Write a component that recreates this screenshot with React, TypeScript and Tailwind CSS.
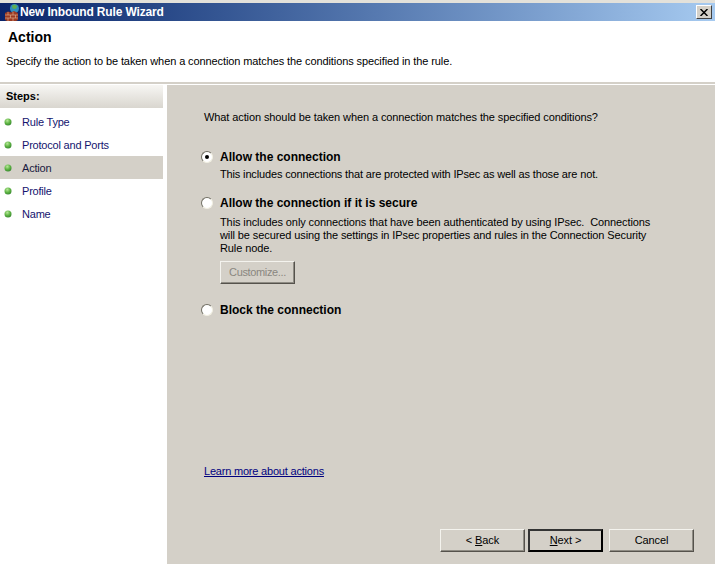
const font = "font-['Liberation_Sans',Arial,sans-serif]";

const steps = [
  { name: "Rule Type" },
  { name: "Protocol and Ports" },
  { name: "Action", active: true },
  { name: "Profile" },
  { name: "Name" },
];

function WizardIcon() {
  return (
    <svg width="17" height="18" viewBox="0 0 17 18" className="shrink-0">
      <circle cx="11.5" cy="5.5" r="4.5" fill="#2f8fc0" />
      <path d="M9 2.5l3-1 2.5 2-2 2.5-3-.5z" fill="#5fae52" />
      <path d="M2 10l3-1.5 3 1 3-1.5 3 1.500 1 1V17l-2 1H4l-2-1z" fill="#9c3a22" />
      <path d="M2 12h13M2 15h13M5 9v3M10 9v3M7.500 12v3M12.500 12v3M5 15v3M10 15v3" stroke="#d9a98a" strokeWidth="0.7" fill="none" />
    </svg>
  );
}

function StepDot() {
  return (
    <svg width="10" height="10" viewBox="0 0 10 10" className="mt-px shrink-0">
      <defs>
        <radialGradient id="dot" cx="0.4" cy="0.3" r="0.8">
          <stop offset="0" stopColor="#b8e89a" />
          <stop offset="0.5" stopColor="#5fb544" />
          <stop offset="1" stopColor="#2f7d2a" />
        </radialGradient>
      </defs>
      <circle cx="5" cy="5" r="3.5" fill="url(#dot)" />
    </svg>
  );
}

function Radio({ checked }: { checked?: boolean }) {
  return (
    <span className="relative block h-3 w-3 shrink-0 rounded-full border border-t-[#716f64] border-l-[#716f64] border-r-[#f1efe2] border-b-[#f1efe2] bg-white">
      {checked && <span className="absolute left-[3px] top-[3px] h-1 w-1 rounded-full bg-black" />}
    </span>
  );
}

function Option({ label, checked, children }: { label: string; checked?: boolean; children?: React.ReactNode }) {
  return (
    <div className="flex gap-[7px]">
      <div className="pt-[4px]">
        <Radio checked={checked} />
      </div>
      <div className="w-[434px]">
        <div className="text-[12px] font-bold leading-[20px] text-black">{label}</div>
        {children}
      </div>
    </div>
  );
}

function Button({ children, isDefault, disabled }: { children: React.ReactNode; isDefault?: boolean; disabled?: boolean }) {
  const edge = isDefault
    ? "border-2 border-t-[#333] border-l-[#333] border-r-black border-b-black bg-[#d4d0c8] text-black tracking-[-0.1px]"
    : disabled
      ? "border border-t-[#f4f3ee] border-l-[#f4f3ee] border-r-[#55524c] border-b-[#55524c] shadow-[inset_-1px_-1px_0_#8f8c84] bg-[#d4d0c8] text-[#8a8780] tracking-[-0.35px]"
      : "border border-t-[#f4f3ee] border-l-[#f4f3ee] border-r-[#55524c] border-b-[#55524c] shadow-[inset_-1px_-1px_0_#8f8c84] bg-[#d4d0c8] text-black tracking-[-0.1px]";
  return (
    <div className={`flex h-full w-full items-center justify-center text-[11px] ${edge}`}>{children}</div>
  );
}

export default function App() {
  return (
    <div className={`flex h-[564px] w-[715px] flex-col overflow-hidden bg-white ${font}`}>
      <div className="h-[3px] bg-[#e3e1da]" />
      <div className="flex h-[18px] items-center bg-gradient-to-r from-[#0a246a] to-[#a6caf0] pl-[3px] pr-[3px]">
        <WizardIcon />
        <span className="ml-0 text-[12px] font-bold tracking-[-0.15px] text-white">New Inbound Rule Wizard</span>
        <div className="ml-auto flex h-[14px] w-[16px] items-center justify-center border border-t-white border-l-white border-r-[#404040] border-b-[#404040] bg-[#d4d0c8]">
          <svg width="8" height="7" viewBox="0 0 8 7">
            <path d="M0.5 0l7 7M7.5 0l-7 7" stroke="black" strokeWidth="1.5" fill="none" />
          </svg>
        </div>
      </div>
      <div className="h-[61px] pl-[8px] pt-[8px]">
        <div className="text-[14px] font-bold leading-[17px] text-black">Action</div>
        <div className="-ml-[2px] mt-[8px] text-[11px] leading-[15px] tracking-[-0.1px] text-black">
          Specify the action to be taken when a connection matches the conditions specified in the rule.
        </div>
      </div>
      <div className="h-[2px] bg-[#d4d0c8]" />
      <div className="h-px bg-white" />
      <div className="flex min-h-0 flex-1">
        <div className="w-[164px] shrink-0 bg-white">
          <div className="mr-px flex h-[23px] items-center bg-gradient-to-b from-[#f7f6f3] to-[#d9d6cf] pl-[6px] text-[11px] font-bold text-black">
            Steps:
          </div>
          <div className="pt-[2px]">
            {steps.map((s) => (
              <div
                key={s.name}
                className={`mr-px flex h-[23px] items-center gap-[9px] pl-[3px] text-[11px] tracking-[-0.2px] ${s.active ? "bg-[#d4d0c8] text-[#1a1a40]" : "text-[#14146e]"}`}
              >
                <StepDot />
                <span className="pt-px">{s.name}</span>
              </div>
            ))}
          </div>
        </div>
        <div className="w-[3px] shrink-0 bg-white" />
        <div className="flex flex-1 flex-col bg-[#d4d0c8] pb-[12px] pl-[34px] pr-[21px] pt-[25px]">
          <div className="pl-[3px] text-[11px] leading-[15px] tracking-[-0.1px] text-black">
            What action should be taken when a connection matches the specified conditions?
          </div>
          <div className="mt-[22px]">
            <Option label="Allow the connection" checked>
              <div className="text-[11px] leading-[15px] tracking-[-0.15px] text-black">
                This includes connections that are protected with IPsec as well as those are not.
              </div>
            </Option>
          </div>
          <div className="mt-[11px]">
            <Option label="Allow the connection if it is secure">
              <div className="mt-[3px] text-[11px] leading-[13px] tracking-[-0.1px] text-black">
                This includes only connections that have been authenticated by using IPsec.&nbsp; Connections will be secured using the settings in IPsec properties and rules in the Connection Security Rule node.
              </div>
              <div className="mt-[6px] h-[23px] w-[75px]">
                <Button disabled>Customize...</Button>
              </div>
            </Option>
          </div>
          <div className="mt-[16px]">
            <Option label="Block the connection" />
          </div>
          <div className="mt-auto pl-[3px]">
            <span className="text-[11px] tracking-[-0.2px] text-[#00007f] underline">Learn more about actions</span>
          </div>
          <div className="mt-[47px] flex justify-end">
            <div className="h-[23px] w-[85px]"><Button><span>&lt; <u>B</u>ack</span></Button></div>
            <div className="ml-[3px] h-[23px] w-[75px]"><Button isDefault><span><u>N</u>ext &gt;</span></Button></div>
            <div className="ml-[6px] h-[23px] w-[85px]"><Button>Cancel</Button></div>
          </div>
        </div>
      </div>
    </div>
  );
}
